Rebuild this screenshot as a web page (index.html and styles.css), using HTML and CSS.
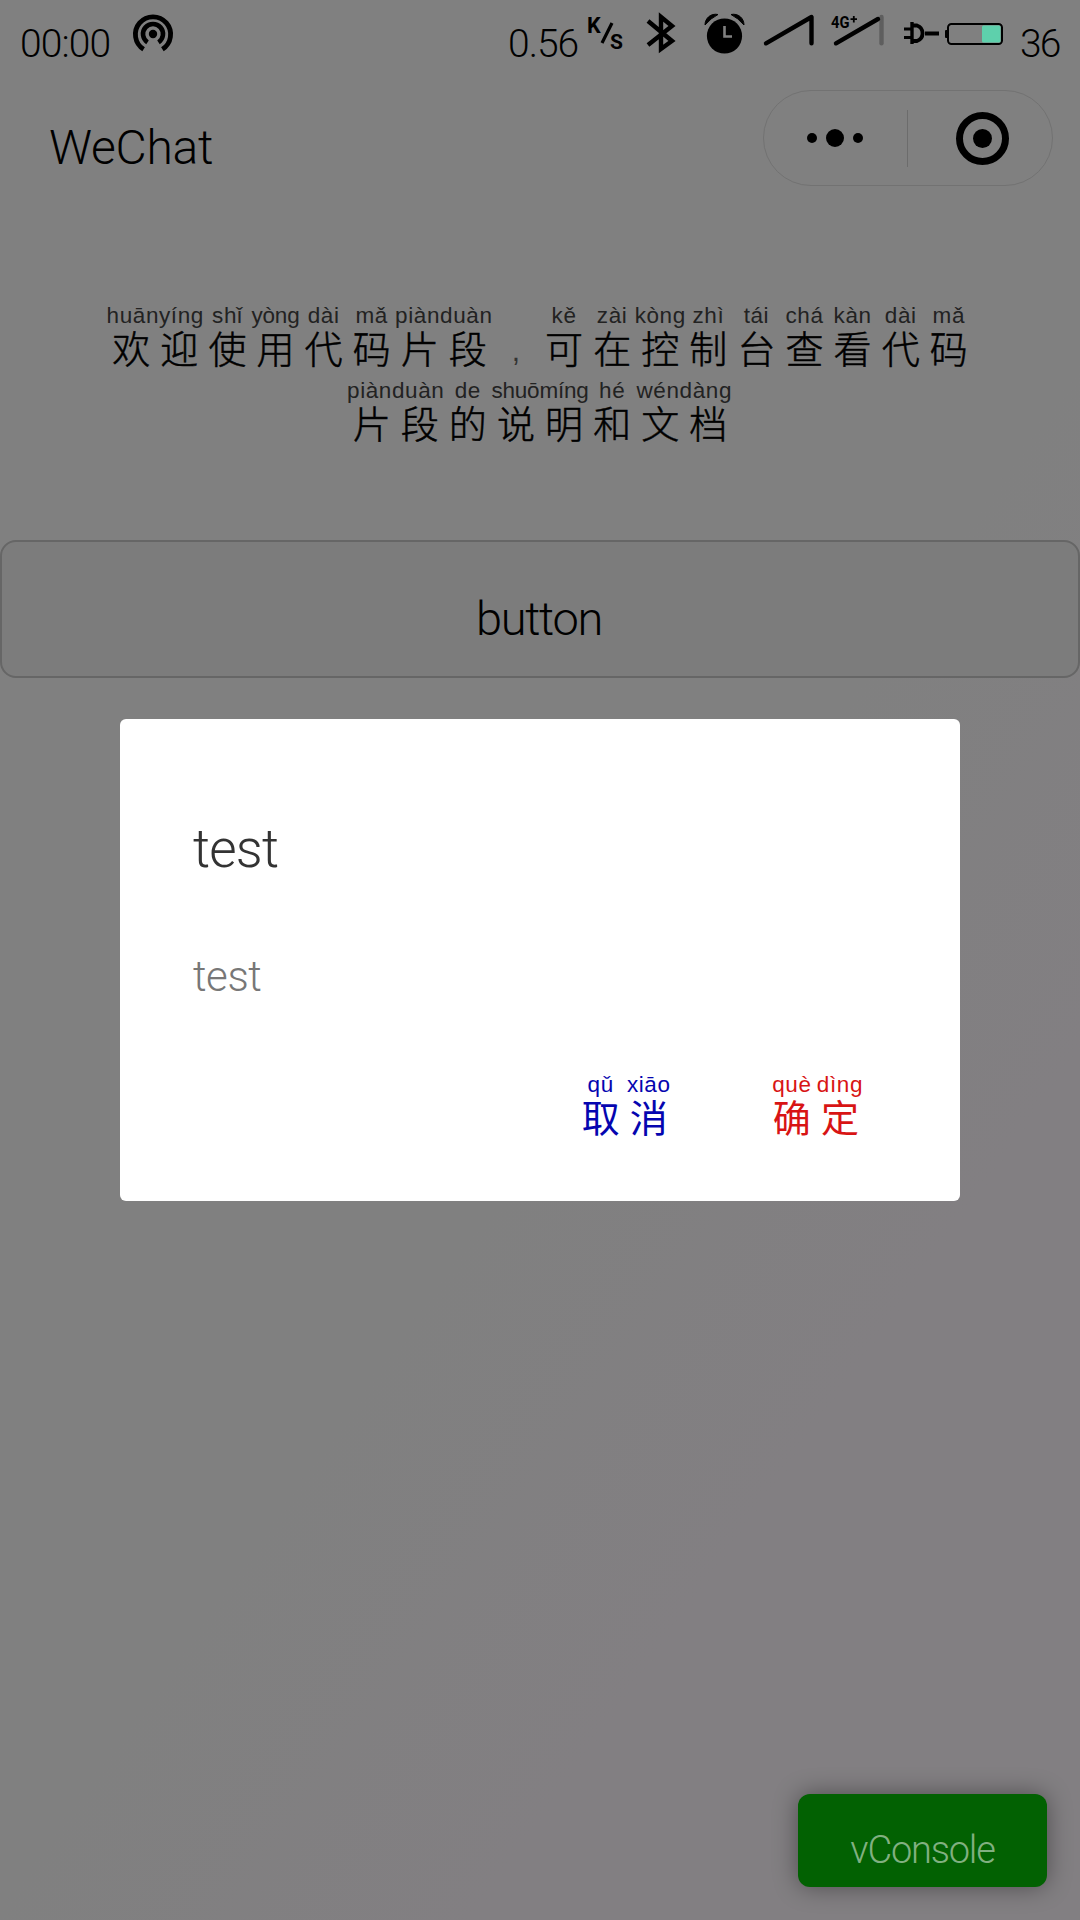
FILE: index.html
```
<!DOCTYPE html>
<html lang="zh-CN">
<head>
    <meta charset="UTF-8">
    <meta name="viewport" content="width=device-width, initial-scale=1.0">
    <title>WeChat</title>
    <link rel="stylesheet" href="styles.css">
</head>
<body>
    <div class="status-bar">
        <span class="time">00:00</span>
        <svg class="icon hotspot" width="46" height="70" viewBox="130 0 46 70">
            <circle cx="153" cy="34" r="4.2"/>
            <path d="M147.5 42.3A10 10 0 1 1 158.5 42.3" fill="none" stroke="#000" stroke-width="4.6"/>
            <path d="M143.6 49.3A17.6 17.6 0 1 1 162.4 49.3" fill="none" stroke="#000" stroke-width="4.8"/>
        </svg>
        <div class="status-right">
            <span class="speed">0.56</span>
            <svg class="icon unit" width="44" height="70" viewBox="584 0 44 70">
                <text x="587" y="32.5" font-size="21.5">K</text>
                <path d="M602 43L612 23" stroke="#000" stroke-width="3.2"/>
                <text x="610" y="48.5" font-size="21">S</text>
            </svg>
            <svg class="icon bluetooth" width="36" height="70" viewBox="644 0 36 70">
                <path d="M648 21L672 41L661 49V17L672 26L648 45" fill="none" stroke="#000" stroke-width="4.4"/>
            </svg>
            <svg class="icon alarm" width="46" height="70" viewBox="702 0 46 70">
                <circle cx="724.5" cy="36" r="17.6"/>
                <path d="M705 25C705 18 711 13 718 14.5Q711 18 705 25ZM744 25C744 18 738 13 731 14.5Q738 18 744 25Z" stroke="#000"/>
                <path d="M724.5 26V36.5H732" fill="none" stroke="#808080" stroke-width="2.6"/>
            </svg>
            <svg class="icon signal" width="54" height="70" viewBox="762 0 54 70">
                <path d="M766 43.3L811.5 17V43.3" fill="none" stroke="#000" stroke-width="4.4" stroke-linecap="round" stroke-linejoin="round"/>
            </svg>
            <svg class="icon signal-4g" width="60" height="70" viewBox="828 0 60 70">
                <path d="M881.5 17V43.3" stroke="#5e5e5e" stroke-width="4.4" stroke-linecap="round"/>
                <path d="M836 43.3L878 19" stroke="#000" stroke-width="4.4" stroke-linecap="round"/>
                <text x="831" y="27.5" font-size="16" textLength="18.5" lengthAdjust="spacingAndGlyphs">4G</text>
                <path d="M850.5 19.2H857M853.8 16V22.5" stroke="#000" stroke-width="1.8"/>
            </svg>
            <svg class="icon plug" width="42" height="70" viewBox="900 0 42 70">
                <path d="M904 29H911M904 37.5H911" stroke="#000" stroke-width="3.2"/>
                <path d="M912 22V44" stroke="#000" stroke-width="3.4"/>
                <path d="M912 25.5H917A8.2 8.2 0 0 1 917 41H912M925 33.5H939" fill="none" stroke="#000" stroke-width="3.8"/>
            </svg>
            <svg class="icon battery" width="64" height="70" viewBox="942 0 64 70">
                <rect x="945" y="30" width="3" height="8" rx="1"/>
                <rect x="948" y="24" width="54" height="20" rx="3.5" fill="none" stroke="#000" stroke-width="2"/>
                <rect x="982" y="25.5" width="18.5" height="17" rx="1.5" fill="#5ed0ac"/>
            </svg>
            <span class="percent">36</span>
        </div>
    </div>

    <div class="nav">
        <div class="nav-title">WeChat</div>
        <div class="capsule">
            <svg class="more" width="143" height="94" viewBox="0 0 143 94">
                <circle cx="48" cy="47" r="5"/>
                <circle cx="71" cy="47" r="9"/>
                <circle cx="94" cy="47" r="5"/>
            </svg>
            <div class="divider"></div>
            <svg class="close" width="143" height="94" viewBox="0 0 143 94">
                <circle cx="74.5" cy="47.5" r="23" fill="none" stroke="#000" stroke-width="7"/>
                <circle cx="74.5" cy="47.5" r="9.5"/>
            </svg>
        </div>
    </div>

    <div class="intro">
        <div class="line">
            <div class="word"><span class="py">huānyíng</span><span class="hz"><i>欢</i><i>迎</i></span></div>
            <div class="word"><span class="py">shǐ</span><span class="hz"><i>使</i></span></div>
            <div class="word"><span class="py tight">yòng</span><span class="hz"><i>用</i></span></div>
            <div class="word"><span class="py">dài</span><span class="hz"><i>代</i></span></div>
            <div class="word"><span class="py">mǎ</span><span class="hz"><i>码</i></span></div>
            <div class="word"><span class="py">piànduàn</span><span class="hz"><i>片</i><i>段</i></span></div>
            <div class="word"><span class="py"></span><span class="hz comma"><i>,</i></span></div>
            <div class="word"><span class="py">kě</span><span class="hz"><i>可</i></span></div>
            <div class="word"><span class="py">zài</span><span class="hz"><i>在</i></span></div>
            <div class="word"><span class="py">kòng</span><span class="hz"><i>控</i></span></div>
            <div class="word"><span class="py">zhì</span><span class="hz"><i>制</i></span></div>
            <div class="word"><span class="py">tái</span><span class="hz"><i>台</i></span></div>
            <div class="word"><span class="py">chá</span><span class="hz"><i>查</i></span></div>
            <div class="word"><span class="py">kàn</span><span class="hz"><i>看</i></span></div>
            <div class="word"><span class="py">dài</span><span class="hz"><i>代</i></span></div>
            <div class="word"><span class="py">mǎ</span><span class="hz"><i>码</i></span></div>
        </div>
        <div class="line">
            <div class="word"><span class="py">piànduàn</span><span class="hz"><i>片</i><i>段</i></span></div>
            <div class="word"><span class="py">de</span><span class="hz"><i>的</i></span></div>
            <div class="word"><span class="py tight">shuōmíng</span><span class="hz"><i>说</i><i>明</i></span></div>
            <div class="word"><span class="py">hé</span><span class="hz"><i>和</i></span></div>
            <div class="word"><span class="py">wéndàng</span><span class="hz"><i>文</i><i>档</i></span></div>
        </div>
    </div>

    <button class="btn">button</button>

    <div class="modal">
        <div class="modal-title">test</div>
        <div class="modal-text">test</div>
        <div class="modal-footer">
            <div class="line cancel">
                <div class="word"><span class="py">qǔ</span><span class="hz"><i>取</i></span></div>
                <div class="word"><span class="py">xiāo</span><span class="hz"><i>消</i></span></div>
            </div>
            <div class="line confirm">
                <div class="word"><span class="py">què</span><span class="hz"><i>确</i></span></div>
                <div class="word"><span class="py">dìng</span><span class="hz"><i>定</i></span></div>
            </div>
        </div>
    </div>

    <div class="vconsole">vConsole</div>
</body>
</html>
```
FILE: styles.css
```
* {
    box-sizing: border-box;
}

body {
    margin: 0;
    width: 1080px;
    height: 1920px;
    position: relative;
    overflow: hidden;
    background: linear-gradient(125deg, #808080 55%, #827f82 75%);
    color: #000;
    font-family: Roboto, "Liberation Sans", sans-serif;
    font-weight: 300;
}

svg {
    display: block;
    flex: none;
}

/* status bar */
.status-bar {
    display: flex;
    align-items: flex-start;
    height: 70px;
    padding: 0 18px 0 20px;
    font-size: 39px;
    line-height: 89px;
    white-space: nowrap;
}

.time {
    width: 92px;
    letter-spacing: -0.9px;
}

.icon text {
    font-family: Roboto, sans-serif;
    font-weight: bold;
}

.hotspot {
    margin-left: 18px;
}

.status-right {
    display: flex;
    margin-left: auto;
}

.speed {
    width: 73px;
    margin-right: -1px;
    padding-left: 2px;
    letter-spacing: -1px;
}

.unit {
    margin-left: 6px;
}

.bluetooth {
    margin-left: 16px;
}

.alarm {
    margin-left: 22px;
}

.signal {
    margin-left: 14px;
}

.signal-4g,
.plug {
    margin-left: 12px;
}

.percent {
    width: 42px;
    margin-left: 14px;
    letter-spacing: -2px;
}

/* navigation */
.nav {
    display: flex;
    justify-content: space-between;
    height: 135px;
    padding: 0 27px 0 49px;
}

.nav-title {
    font-size: 48px;
    line-height: 156px;
    letter-spacing: -0.3px;
}

.capsule {
    display: flex;
    align-items: center;
    width: 290px;
    height: 96px;
    margin-top: 20px;
    border: 1px solid #727272;
    border-radius: 48px;
}

.divider {
    width: 1px;
    height: 57px;
    background: #6c6c6c;
}

/* pinyin over characters */
.intro {
    display: flex;
    flex-direction: column;
    align-items: center;
    gap: 11px;
    padding-top: 99px;
}

.line {
    display: flex;
}

.word {
    display: flex;
    flex-direction: column;
    align-items: center;
}

.py {
    height: 22px;
    width: 0;
    display: flex;
    justify-content: center;
    font-family: "Liberation Sans", Arial, sans-serif;
    font-size: 22.5px;
    font-weight: 400;
    line-height: 24px;
    letter-spacing: 0.6px;
    white-space: nowrap;
    color: #222;
}

.tight {
    letter-spacing: -0.2px;
}

.hz {
    display: flex;
    height: 42px;
    font-family: "Noto Sans CJK SC", sans-serif;
    font-size: 38px;
    font-weight: 300;
    line-height: 41px;
    -webkit-text-stroke: 0.5px currentColor;
}

.hz i {
    width: 48.1px;
    font-style: normal;
    text-align: center;
}

.comma {
    color: #333;
    font-family: "Liberation Sans", sans-serif;
    font-size: 30px;
    line-height: 50px;
    -webkit-text-stroke: 0;
}

.btn {
    display: block;
    width: 1080px;
    height: 138px;
    margin: 97px 0 0;
    padding: 18px 2px 0 0;
    border: 2px solid #666;
    border-radius: 16px;
    background: #7c7c7c;
    color: #000;
    font: 300 47px Roboto, sans-serif;
    letter-spacing: -1.3px;
}

/* dialog */
.modal {
    position: absolute;
    left: 120px;
    top: 719px;
    width: 840px;
    height: 482px;
    padding: 80px 72px 0 73px;
    border-radius: 6px;
    background: #fff;
}

.modal-title {
    height: 120px;
    font-size: 53px;
    line-height: 100px;
    letter-spacing: -0.8px;
    color: #333;
}

.modal-text {
    height: 154px;
    font-size: 42px;
    line-height: 116px;
    letter-spacing: -0.4px;
    color: #777;
}

.modal-footer {
    display: flex;
    justify-content: flex-end;
    gap: 95px;
    padding-right: 24px;
}

.modal-footer .hz {
    font-weight: 400;
    -webkit-text-stroke: 0;
}

.cancel,
.cancel .py {
    color: #0505b0;
}

.confirm,
.confirm .py {
    color: #d81414;
}

.vconsole {
    position: absolute;
    left: 798px;
    top: 1794px;
    width: 249px;
    height: 93px;
    border-radius: 12px;
    background: #026102;
    box-shadow: 0 0 24px rgba(0, 0, 0, 0.4);
    color: #81b081;
    font-size: 38px;
    line-height: 112px;
    letter-spacing: -1.2px;
    text-align: center;
}
```
